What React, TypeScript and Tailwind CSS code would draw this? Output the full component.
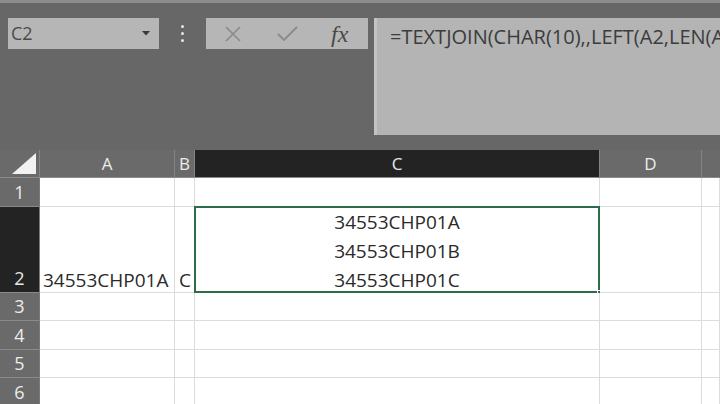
import React from "react";

const FONT = { fontFamily: '"Open Sans", "Noto Sans", sans-serif' };

const COLS = ["A", "B", "C", "D"];

function HeaderCell({ label, selected, last }: { label: string; selected?: boolean; last?: boolean }) {
  return (
    <div
      className={`flex items-center justify-center text-[17px] border-b border-[#8a8a8a] ${
        last ? "" : "border-r border-r-[#858585]"
      } ${selected ? "bg-[#232323] text-[#e8e8e8]" : "bg-[#6a6a6a] text-[#ececec]"}`}
    >
      {label}
    </div>
  );
}

function RowHead({ n, selected }: { n: number; selected?: boolean }) {
  return (
    <div
      className={`flex items-end justify-center text-[18px] leading-[28px] border-b border-[#8a8a8a] border-r border-r-[#7a7a7a] ${
        selected ? "bg-[#232323] text-[#e8e8e8]" : "bg-[#6a6a6a] text-[#ececec]"
      }`}
    >
      {n}
    </div>
  );
}

function Cell({ children, className = "" }: { children?: React.ReactNode; className?: string }) {
  return (
    <div className={`relative bg-white border-b border-r border-[#dcdcdc] overflow-hidden ${className}`}>
      {children}
    </div>
  );
}

export default function App() {
  const rows = [1, 2, 3, 4, 5, 6];
  return (
    <div className="w-[720px] h-[404px] overflow-hidden bg-[#676767]" style={FONT}>
      {/* formula bar area */}
      <div className="h-[150px] border-t-[3px] border-[#8d8d8d]">
        <div className="flex items-start pt-[15px] pl-[8px]">
          <div className="flex h-[31px] w-[151px] items-center justify-between bg-[#b6b6b6] pl-[3px] pr-[9px] text-[18px] text-[#4a4a4a]">
            <span>C2</span>
            <svg width="8" height="5" viewBox="0 0 8 5">
              <path d="M0 0h8L4 4.5z" fill="#3a3a3a" />
            </svg>
          </div>
          <div className="flex h-[31px] w-[47px] flex-col items-center justify-center gap-[4px]">
            <span className="h-[3px] w-[3px] rounded-full bg-[#e6e6e6]" />
            <span className="h-[3px] w-[3px] rounded-full bg-[#e6e6e6]" />
            <span className="h-[3px] w-[3px] rounded-full bg-[#e6e6e6]" />
          </div>
          <div className="flex h-[31px] w-[162px] items-center bg-[#b6b6b6]">
            <svg width="18" height="16" viewBox="0 0 18 16" className="ml-[18px]">
              <path d="M2 1l14 14M16 1L2 15" stroke="#8a8a8a" strokeWidth="1.6" />
            </svg>
            <svg width="21" height="16" viewBox="0 0 21 16" className="ml-[35px]">
              <path d="M1 8l6 6L20 1" stroke="#8a8a8a" strokeWidth="1.8" fill="none" />
            </svg>
            <span
              className="ml-[33px] text-[24px] italic leading-none text-[#4a4a4a]"
              style={{ fontFamily: '"Liberation Serif", "DejaVu Serif", serif' }}
            >
              fx
            </span>
          </div>
          <div className="ml-[6px] h-[117px] flex-1 border-l-[3px] border-[#c4c4c4] bg-[#b4b4b4] pl-[13px] pt-[4px] text-[20px] text-[#3c3c3c] whitespace-nowrap overflow-hidden">
            =TEXTJOIN(CHAR(10),,LEFT(A2,LEN(A2
          </div>
        </div>
      </div>

      {/* sheet grid */}
      <div className="grid grid-cols-[40px_135px_20px_405px_102px_1fr] grid-rows-[28px_29px_86px_28px_29px_28px_29px]">
        <div className="relative bg-[#6a6a6a] border-b border-[#8a8a8a] border-r border-r-[#858585]">
          <svg width="24" height="21" viewBox="0 0 24 21" className="absolute right-[3px] bottom-[3px]">
            <path d="M24 0V21H0z" fill="#f2f2f2" />
          </svg>
        </div>
        {COLS.map((c) => (
          <HeaderCell key={c} label={c} selected={c === "C"} />
        ))}
        <HeaderCell label="" last />

        {rows.map((r) => (
          <React.Fragment key={r}>
            <RowHead n={r} selected={r === 2} />
            <Cell>
              {r === 2 && (
                <span className="absolute bottom-0 left-[3px] translate-y-[2px] text-[19px] leading-[27px] text-[#2a2a2a]">
                  34553CHP01A
                </span>
              )}
            </Cell>
            <Cell>
              {r === 2 && (
                <span className="absolute bottom-0 left-[4px] translate-y-[2px] text-[19px] leading-[27px] text-[#2a2a2a]">
                  C
                </span>
              )}
            </Cell>
            <Cell className={r === 2 ? "overflow-visible" : ""}>
              {r === 2 && (
                <>
                  <div className="flex h-full translate-y-[3px] flex-col items-center justify-end text-[19px] leading-[29px] text-[#2a2a2a]">
                    <span>34553CHP01A</span>
                    <span>34553CHP01B</span>
                    <span>34553CHP01C</span>
                  </div>
                  <div className="pointer-events-none absolute -left-[1px] -top-[1px] -right-[1px] -bottom-[1px] border-2 border-[#2d6b4c]" />
                  <div className="absolute -right-[4px] -bottom-[4px] h-[6px] w-[6px] bg-[#2d6b4c] border border-white" />
                </>
              )}
            </Cell>
            <Cell />
            <Cell />
          </React.Fragment>
        ))}
      </div>
    </div>
  );
}
